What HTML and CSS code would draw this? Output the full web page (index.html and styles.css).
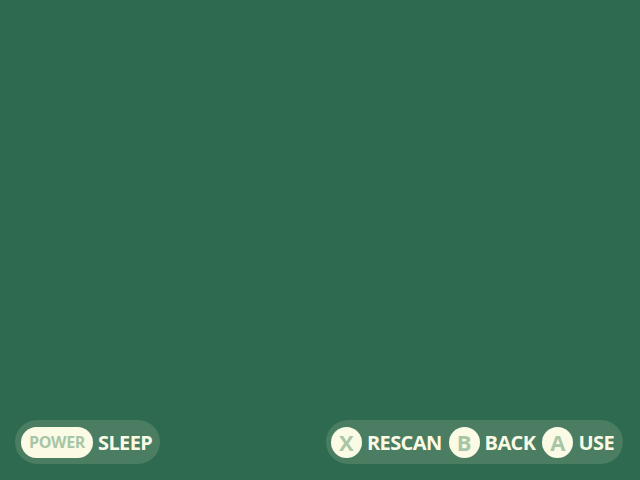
FILE: index.html
```html
<!DOCTYPE html>
<html>
<head>
<meta charset="utf-8">
<link rel="stylesheet" href="styles.css">
</head>
<body>
<div class="screen">
  <div class="content"></div>
  <div class="footer">
    <div class="pill pill-left">
      <span class="key key-wide">POWER</span>
      <span class="label">SLEEP</span>
    </div>
    <div class="pill pill-right">
      <span class="key key-round">X</span>
      <span class="label">RESCAN</span>
      <span class="key key-round">B</span>
      <span class="label">BACK</span>
      <span class="key key-round">A</span>
      <span class="label">USE</span>
    </div>
  </div>
</div>
</body>
</html>
```

FILE: styles.css
```css
html, body {
  margin: 0;
  padding: 0;
  width: 640px;
  height: 480px;
  overflow: hidden;
  background: #2e6a4f;
}
.screen {
  width: 640px;
  height: 480px;
  display: flex;
  flex-direction: column;
  font-family: "Open Sans", "DejaVu Sans", sans-serif;
  font-weight: 700;
}
.content {
  flex: 1;
}
.footer {
  display: flex;
  justify-content: space-between;
  align-items: center;
  padding: 0 17px 16px 15px;
}
.pill {
  display: flex;
  align-items: center;
  height: 44px;
  border-radius: 22px;
  background: #4a7d62;
  box-sizing: border-box;
}
.pill-left {
  padding: 0 8px 0 6px;
}
.pill-right {
  padding: 0 9px 0 5px;
}
.key {
  display: flex;
  align-items: center;
  justify-content: center;
  background: #fbfbe5;
  color: #a8c6a6;
}
.key-wide {
  height: 31px;
  border-radius: 16px;
  width: 72px;
  box-sizing: border-box;
  font-size: 16px;
  letter-spacing: -0.4px;
}
.key-round {
  width: 31px;
  height: 31px;
  border-radius: 50%;
  font-size: 22px;
}
.label {
  color: #fbfbe5;
  font-size: 20px;
  letter-spacing: -0.6px;
  margin: 0 7px 0 5px;
}
.label:last-child {
  margin-right: 0;
}
```
